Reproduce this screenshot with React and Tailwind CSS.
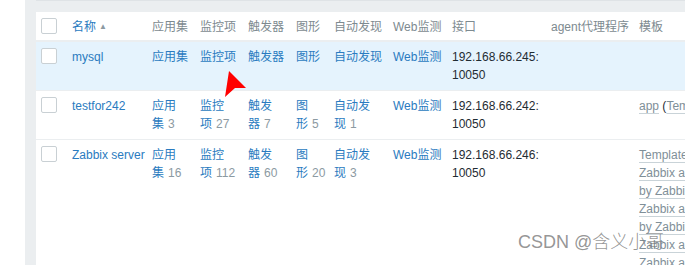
import React from "react";

const LINK = "text-[#2a7bc0]";
const NUM = "text-[#8c9aa2] ml-[4px]";
const HEAD = "text-[#7d8a90]";

function Check() {
  return <div className="w-[16px] h-[16px] rounded-[2px] border border-[#c9d0d4] bg-white" />;
}

function Tpl({ children }) {
  return (
    <span className="text-[#7f8f98] underline decoration-[#c9d3d8] underline-offset-[3px]">{children}</span>
  );
}

function Row({ bg, name, c1, c2, c3, c4, c5, web, ip, tpl }) {
  return (
    <div className={`flex border-b border-[#ebeef0] py-[6px] ${bg}`}>
      <div className="w-[31px] shrink-0 pl-[5px]"><Check /></div>
      <div className={`w-[80px] shrink-0 pl-[5px] whitespace-nowrap ${LINK}`}>{name}</div>
      <div className="w-[48px] shrink-0 pl-[5px] whitespace-nowrap">{c1}</div>
      <div className="w-[48px] shrink-0 pl-[5px] whitespace-nowrap">{c2}</div>
      <div className="w-[48px] shrink-0 pl-[5px] whitespace-nowrap">{c3}</div>
      <div className="w-[38px] shrink-0 pl-[5px] whitespace-nowrap">{c4}</div>
      <div className="w-[59px] shrink-0 pl-[5px] whitespace-nowrap">{c5}</div>
      <div className={`w-[59px] shrink-0 pl-[5px] whitespace-nowrap ${LINK}`}>{web}</div>
      <div className="w-[99px] shrink-0 pl-[5px] whitespace-nowrap text-[#1f2c33]">
        <div>{ip}</div>
        <div>10050</div>
      </div>
      <div className="w-[88px] shrink-0 pl-[5px]" />
      <div className="flex-1 min-w-0 pl-[5px] overflow-hidden whitespace-nowrap">{tpl}</div>
    </div>
  );
}

function Two({ a, b, n }) {
  return (
    <div>
      <div className={LINK}>{a}</div>
      <div>
        <span className={LINK}>{b}</span>
        <span className={NUM}>{n}</span>
      </div>
    </div>
  );
}

export default function App() {
  return (
    <div
      className="relative w-[685px] h-[265px] overflow-hidden bg-white flex text-[12px] leading-[18px]"
      style={{ fontFamily: '"Liberation Sans", Arial, "Noto Sans CJK SC", sans-serif' }}
    >
      <div className="w-[25px] shrink-0 bg-white" />
      <div className="w-[11px] shrink-0 bg-[#ebeef0]" />
      <div className="flex-1 min-w-0 flex flex-col">
        <div className="h-[12px] shrink-0 bg-[#ebeef0] border-t border-[#dfe3e6]" />
        <div className="flex-1 bg-white">
          <div className="flex border-b-2 border-[#ebeef0] pt-[6px] pb-[4px] bg-white">
            <div className="w-[31px] shrink-0 pl-[5px]"><Check /></div>
            <div className="w-[80px] shrink-0 pl-[5px] whitespace-nowrap flex items-center">
              <span className={LINK}>名称</span>
              <span className="ml-[3px] text-[8px] leading-[18px] text-[#8c9aa2]">▲</span>
            </div>
            <div className={`w-[48px] shrink-0 pl-[5px] whitespace-nowrap ${HEAD}`}>应用集</div>
            <div className={`w-[48px] shrink-0 pl-[5px] whitespace-nowrap ${HEAD}`}>监控项</div>
            <div className={`w-[48px] shrink-0 pl-[5px] whitespace-nowrap ${HEAD}`}>触发器</div>
            <div className={`w-[38px] shrink-0 pl-[5px] whitespace-nowrap ${HEAD}`}>图形</div>
            <div className={`w-[59px] shrink-0 pl-[5px] whitespace-nowrap ${HEAD}`}>自动发现</div>
            <div className={`w-[59px] shrink-0 pl-[5px] whitespace-nowrap ${HEAD}`}>Web监测</div>
            <div className={`w-[99px] shrink-0 pl-[5px] whitespace-nowrap ${HEAD}`}>接口</div>
            <div className={`w-[88px] shrink-0 pl-[5px] whitespace-nowrap ${HEAD}`}>agent代理程序</div>
            <div className={`flex-1 min-w-0 pl-[5px] whitespace-nowrap overflow-hidden ${HEAD}`}>模板</div>
          </div>

          <Row
            bg="bg-[#e5f3fd]"
            name="mysql"
            c1={<span className={LINK}>应用集</span>}
            c2={<span className={LINK}>监控项</span>}
            c3={<span className={LINK}>触发器</span>}
            c4={<span className={LINK}>图形</span>}
            c5={<span className={LINK}>自动发现</span>}
            web="Web监测"
            ip="192.168.66.245:"
            tpl={null}
          />
          <Row
            bg="bg-white"
            name="testfor242"
            c1={<Two a="应用" b="集" n="3" />}
            c2={<Two a="监控" b="项" n="27" />}
            c3={<Two a="触发" b="器" n="7" />}
            c4={<Two a="图" b="形" n="5" />}
            c5={<Two a="自动发" b="现" n="1" />}
            web="Web监测"
            ip="192.168.66.242:"
            tpl={
              <div>
                <Tpl>app</Tpl>
                <span className="text-[#1f2c33]"> (</span>
                <Tpl>Template App</Tpl>
              </div>
            }
          />
          <Row
            bg="bg-white"
            name="Zabbix server"
            c1={<Two a="应用" b="集" n="16" />}
            c2={<Two a="监控" b="项" n="112" />}
            c3={<Two a="触发" b="器" n="60" />}
            c4={<Two a="图" b="形" n="20" />}
            c5={<Two a="自动发" b="现" n="3" />}
            web="Web监测"
            ip="192.168.66.246:"
            tpl={
              <div className="flex flex-col">
                <div><Tpl>Template OS Linux</Tpl></div>
                <div><Tpl>Zabbix agent</Tpl></div>
                <div><Tpl>by Zabbix agent</Tpl></div>
                <div><Tpl>Zabbix agent</Tpl></div>
                <div><Tpl>by Zabbix agent</Tpl></div>
                <div><Tpl>Zabbix agent</Tpl></div>
                <div><Tpl>Zabbix agent</Tpl></div>
              </div>
            }
          />
        </div>
      </div>

      <svg className="absolute left-0 top-0 pointer-events-none" width="685" height="265">
        <polygon points="229,71 246,88 235,88 225,97" fill="#ff0000" />
      </svg>

      <div
        className="absolute left-[518px] top-[231px] text-[18px] leading-[22px] text-[#7a7a7a]/80 whitespace-nowrap pointer-events-none"
        style={{ fontFamily: '"Liberation Sans", Arial, "Noto Sans CJK SC", sans-serif', fontWeight: 300 }}
      >
        CSDN @含义小哥
      </div>
    </div>
  );
}
